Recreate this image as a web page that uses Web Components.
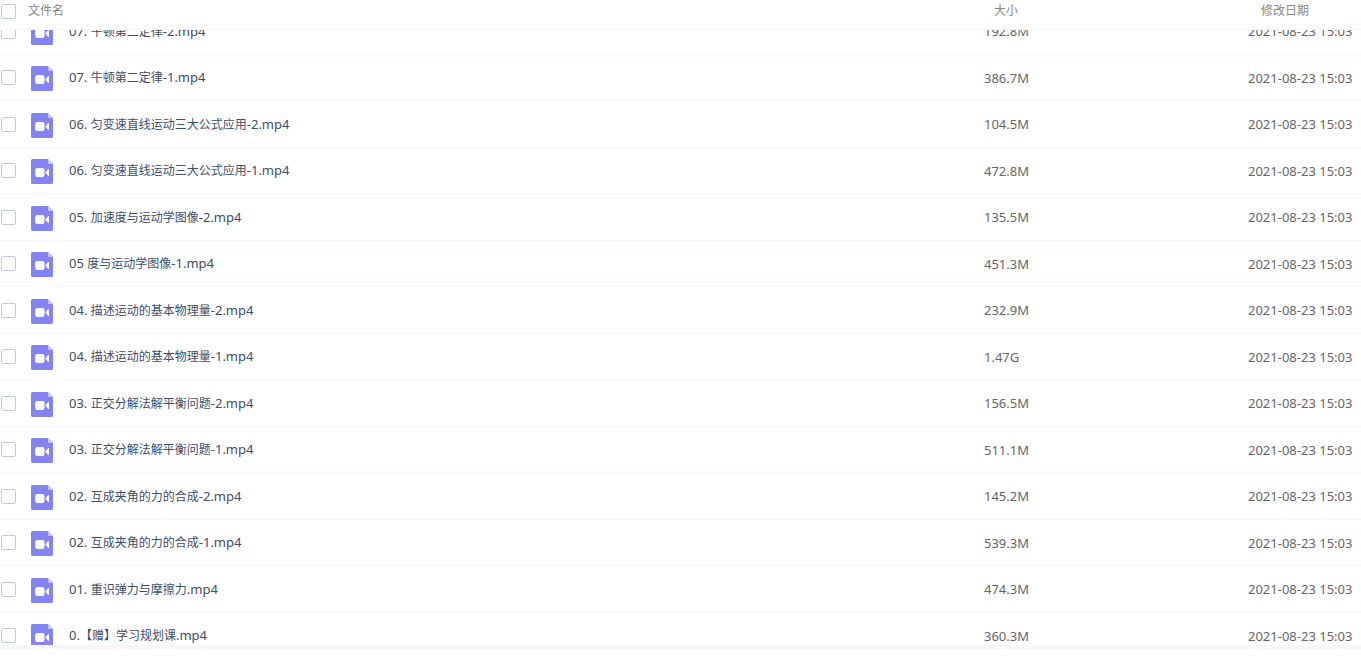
<!DOCTYPE html>
<html lang="zh-CN">
<head>
<meta charset="utf-8">
<title>文件列表</title>
<style>
  html, body { margin: 0; height: 100%; background: #fff; }
  body { font-family: "Noto Sans", "Noto Sans CJK SC", sans-serif; }
</style>
</head>
<body>
<file-browser></file-browser>
<script>
class FileCheck extends HTMLElement {
  constructor() {
    super();
    this.attachShadow({ mode: 'open' }).innerHTML = `
      <style>
        :host { display: block; width: 15px; height: 15px; }
        input {
          appearance: none; display: block; box-sizing: border-box;
          width: 15px; height: 15px; margin: 0;
          border: 1px solid #c3cad9; border-radius: 2px; background: #fff;
        }
        input:checked { background: #8182f0; border-color: #8182f0; }
      </style>
      <input type="checkbox">`;
  }
  connectedCallback() {
    this.shadowRoot.querySelector('input').setAttribute('aria-label', this.getAttribute('label') || '');
  }
}
customElements.define('file-check', FileCheck);

class VideoIcon extends HTMLElement {
  constructor() {
    super();
    this.attachShadow({ mode: 'open' }).innerHTML = `
      <style>
        :host { display: block; width: 22px; height: 25px; }
        svg { display: block; }
      </style>
      <svg width="22" height="25" viewBox="0 0 22 25" aria-hidden="true">
        <path d="M1.5 0H17l5 5v18.500a1.500 1.500 0 0 1-1.500 1.500h-19A1.500 1.500 0 0 1 0 23.500V1.500A1.500 1.500 0 0 1 1.500 0z" fill="#8384f1"/>
        <path d="M17 0l5 5h-4a1 1 0 0 1-1-1z" fill="#c4c5fa"/>
        <rect x="4.200" y="9" width="9.300" height="9" rx="2.200" fill="#fff"/>
        <path d="M14.300 13.500l2.700-3.300q1-.7 1 .5v5.600q0 1.200-1 .5z" fill="#fff"/>
      </svg>`;
  }
}
customElements.define('video-icon', VideoIcon);

/* A file name; its Han characters are set one size below the Latin ones. */
class FileName extends HTMLElement {
  constructor() {
    super();
    this.attachShadow({ mode: 'open' }).innerHTML = `
      <style>
        :host { display: block; white-space: nowrap; font-size: 13px; line-height: 20px; }
        a { display: block; color: #424e67; text-decoration: none; }
        span { font-size: 12px; }
      </style>
      <a href="#"></a>`;
  }
  connectedCallback() {
    this.shadowRoot.querySelector('a').innerHTML =
      this.getAttribute('value').replace(/[\u3000-\u9fff]+/g, '<span>$&</span>');
  }
}
customElements.define('file-name', FileName);

const FILES = [
  ['07. 牛顿第二定律-2.mp4', '192.8M'],
  ['07. 牛顿第二定律-1.mp4', '386.7M'],
  ['06. 匀变速直线运动三大公式应用-2.mp4', '104.5M'],
  ['06. 匀变速直线运动三大公式应用-1.mp4', '472.8M'],
  ['05. 加速度与运动学图像-2.mp4', '135.5M'],
  ['05 度与运动学图像-1.mp4', '451.3M'],
  ['04. 描述运动的基本物理量-2.mp4', '232.9M'],
  ['04. 描述运动的基本物理量-1.mp4', '1.47G'],
  ['03. 正交分解法解平衡问题-2.mp4', '156.5M'],
  ['03. 正交分解法解平衡问题-1.mp4', '511.1M'],
  ['02. 互成夹角的力的合成-2.mp4', '145.2M'],
  ['02. 互成夹角的力的合成-1.mp4', '539.3M'],
  ['01. 重识弹力与摩擦力.mp4', '474.3M'],
  ['0.【赠】学习规划课.mp4', '360.3M']
];

class FileBrowser extends HTMLElement {
  constructor() {
    super();
    this.attachShadow({ mode: 'open' }).innerHTML = `
      <style>
        :host {
          display: flex; flex-direction: column; box-sizing: border-box;
          height: 100vh; padding-bottom: 17px; overflow: hidden;
        }
        .scroll { flex: 1; min-height: 0; overflow: auto; scrollbar-width: none; }
        .foot { flex: none; height: 4px; background: #f7f7f7; }
        table { width: 100%; table-layout: fixed; border-collapse: separate; border-spacing: 0; }
        .c-size { width: 264px; }
        .c-date { width: 113px; }
        th, td {
          box-sizing: border-box; padding: 0; text-align: left; vertical-align: middle;
          border-bottom: 1px solid #f1f5fc; white-space: nowrap;
        }
        th {
          position: sticky; top: 0; z-index: 1; height: 30px; background: #fff;
          color: #888; font-size: 12px; line-height: 22px; font-weight: 400; vertical-align: top;
        }
        th.size { padding-left: 10px; }
        th.date { padding-left: 13px; }
        td { height: 46px; color: #666; font-size: 13px; line-height: 20px; }
        tr:nth-child(odd) td { height: 47px; }
        .cell { display: flex; align-items: center; padding-left: 1px; }
        .head { gap: 12px; }
        video-icon { margin: 2px 16px 0 15px; }
      </style>
      <div class="scroll">
        <table>
          <colgroup><col><col class="c-size"><col class="c-date"></colgroup>
          <thead><tr>
            <th scope="col"><div class="cell head"><file-check label="全选"></file-check>文件名</div></th>
            <th scope="col" class="size">大小</th>
            <th scope="col" class="date">修改日期</th>
          </tr></thead>
          <tbody>${FILES.map(([name, size]) => `
            <tr>
              <td><div class="cell"><file-check label="${name}"></file-check><video-icon></video-icon><file-name value="${name}"></file-name></div></td>
              <td>${size}</td>
              <td>2021-08-23 15:03</td>
            </tr>`).join('')}
          </tbody>
        </table>
      </div>
      <div class="foot"></div>`;
  }
  connectedCallback() {
    this.shadowRoot.querySelector('.scroll').scrollTop = 22;
  }
}
customElements.define('file-browser', FileBrowser);
</script>
</body>
</html>
